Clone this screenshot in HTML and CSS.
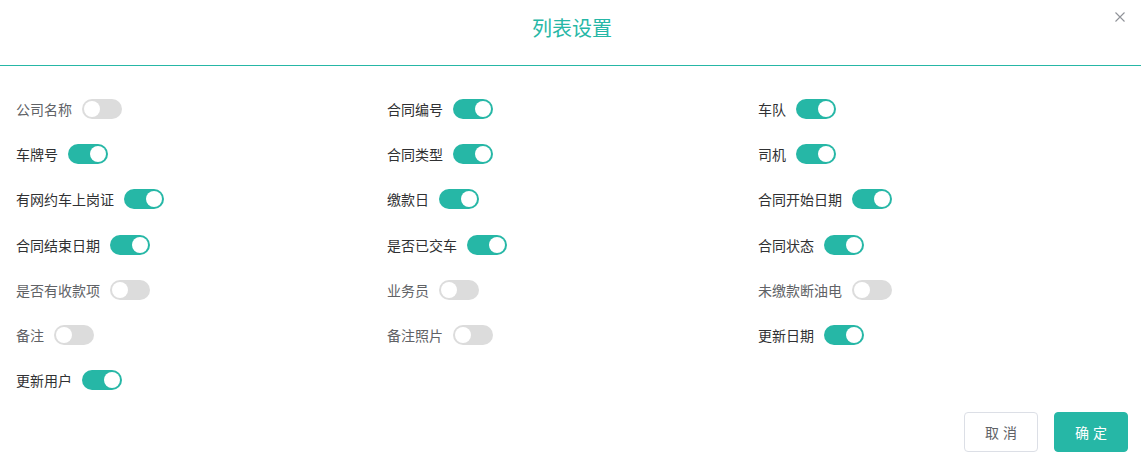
FILE: index.html
```html
<!DOCTYPE html>
<html lang="zh">
<head>
<meta charset="utf-8">
<link rel="stylesheet" href="styles.css">
</head>
<body>
<div class="dialog">
  <div class="header">
    <div class="title">列表设置</div>
    <button class="close" aria-label="close">
      <svg width="10" height="10" viewBox="0 0 10 10"><path d="M0.5 0.5L9.5 9.5M9.5 0.5L0.5 9.5" stroke="#909399" stroke-width="1.1" fill="none"/></svg>
    </button>
  </div>
  <div class="body">
    <div class="item off"><span class="label">公司名称</span><span class="switch"></span></div>
    <div class="item on"><span class="label">合同编号</span><span class="switch"></span></div>
    <div class="item on"><span class="label">车队</span><span class="switch"></span></div>

    <div class="item on"><span class="label">车牌号</span><span class="switch"></span></div>
    <div class="item on"><span class="label">合同类型</span><span class="switch"></span></div>
    <div class="item on"><span class="label">司机</span><span class="switch"></span></div>

    <div class="item on"><span class="label">有网约车上岗证</span><span class="switch"></span></div>
    <div class="item on"><span class="label">缴款日</span><span class="switch"></span></div>
    <div class="item on"><span class="label">合同开始日期</span><span class="switch"></span></div>

    <div class="item on"><span class="label">合同结束日期</span><span class="switch"></span></div>
    <div class="item on"><span class="label">是否已交车</span><span class="switch"></span></div>
    <div class="item on"><span class="label">合同状态</span><span class="switch"></span></div>

    <div class="item off"><span class="label">是否有收款项</span><span class="switch"></span></div>
    <div class="item off"><span class="label">业务员</span><span class="switch"></span></div>
    <div class="item off"><span class="label">未缴款断油电</span><span class="switch"></span></div>

    <div class="item off"><span class="label">备注</span><span class="switch"></span></div>
    <div class="item off"><span class="label">备注照片</span><span class="switch"></span></div>
    <div class="item on"><span class="label">更新日期</span><span class="switch"></span></div>

    <div class="item on"><span class="label">更新用户</span><span class="switch"></span></div>
  </div>
  <div class="footer">
    <button class="btn cancel">取消</button>
    <button class="btn primary">确定</button>
  </div>
</div>
</body>
</html>
```

FILE: styles.css
```css
html, body {
  margin: 0;
  padding: 0;
  background: #fff;
  font-family: "Noto Sans CJK SC", "Liberation Sans", sans-serif;
}
.dialog {
  width: 1141px;
  height: 464px;
  display: flex;
  flex-direction: column;
}
.header {
  position: relative;
  height: 65px;
  border-bottom: 1px solid #26b7a6;
  box-sizing: content-box;
  display: flex;
  justify-content: center;
}
.title {
  padding-top: 17px;
  padding-left: 3px;
  font-size: 20px;
  line-height: 22px;
  color: #26b7a6;
}
.close {
  position: absolute;
  right: 16px;
  top: 12px;
  width: 10px;
  height: 10px;
  padding: 0;
  border: 0;
  background: none;
  display: flex;
}
.body {
  padding: 20.5px 12px 0 16px;
  display: grid;
  grid-template-columns: 371px 371px 371px;
  grid-auto-rows: 45.17px;
}
.item {
  display: flex;
  align-items: center;
  gap: 10px;
  font-size: 14px;
}
.label { line-height: 20px; }
.item.off .label { color: #606266; }
.item.on .label { color: #303133; }
.switch {
  position: relative;
  width: 40px;
  height: 20px;
  border-radius: 10px;
  background: #dcdcdc;
  box-sizing: border-box;
}
.switch::after {
  content: "";
  position: absolute;
  top: 2px;
  left: 2px;
  width: 16px;
  height: 16px;
  border-radius: 50%;
  background: #fff;
}
.item.on .switch { background: #26b7a6; }
.item.on .switch::after { left: 22px; }
.footer {
  margin-top: auto;
  padding: 0 13px 12px 0;
  display: flex;
  justify-content: flex-end;
  gap: 16px;
}
.btn {
  width: 74px;
  height: 40px;
  border-radius: 4px;
  font-family: "Noto Sans CJK SC", sans-serif;
  font-size: 14px;
  letter-spacing: 4px;
  text-indent: 4px;
  box-sizing: border-box;
  padding: 0;
}
.cancel {
  background: #fff;
  border: 1px solid #dcdfe6;
  color: #606266;
}
.primary {
  background: #26b7a6;
  border: 1px solid #26b7a6;
  color: #fff;
}
```
